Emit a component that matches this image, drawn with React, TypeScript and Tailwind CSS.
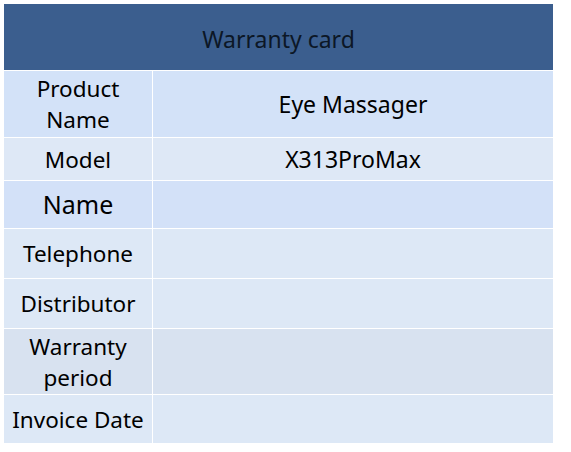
const rows = [
    { label: ["Product", "Name"], value: "Eye Massager", h: "h-[66px]", bg: "bg-[#d3e2f8]", big: false },
    { label: ["Model"], value: "X313ProMax", h: "h-[42px]", bg: "bg-[#dee8f6]", big: false },
    { label: ["Name"], value: "", h: "h-[47px]", bg: "bg-[#d3e1f8]", big: true },
    { label: ["Telephone"], value: "", h: "h-[49px]", bg: "bg-[#dde8f6]", big: false },
    { label: ["Distributor"], value: "", h: "h-[49px]", bg: "bg-[#dde8f6]", big: false },
    { label: ["Warranty", "period"], value: "", h: "h-[65px]", bg: "bg-[#d8e2f0]", big: false },
    { label: ["Invoice Date"], value: "", h: "h-[48px]", bg: "bg-[#dde8f6]", big: false },
];

export default function App() {
    return (
        <div className="w-[571px] h-[452px] bg-white p-[4px] font-['Noto_Sans',sans-serif] text-black">
            <div className="w-[549px] flex flex-col gap-px">
                <div className="h-[66px] bg-[#3b5e8e] flex items-center justify-center pt-[4px] text-[23px] text-[#0c1726]">
                    Warranty card
                </div>
                {rows.map((r, i) => (
                    <div key={i} className="grid grid-cols-[148px_400px] gap-px">
                        <div className={`${r.h} ${r.bg} flex flex-col items-center justify-center text-center ${r.big ? "text-[25px]" : "text-[22.5px]"} leading-[31px]`}>
                            {r.label.map((l) => (
                                <span key={l}>{l}</span>
                            ))}
                        </div>
                        <div className={`${r.h} ${r.bg} flex items-center justify-center text-[23px]`}>
                            {r.value}
                        </div>
                    </div>
                ))}
            </div>
        </div>
    );
}
